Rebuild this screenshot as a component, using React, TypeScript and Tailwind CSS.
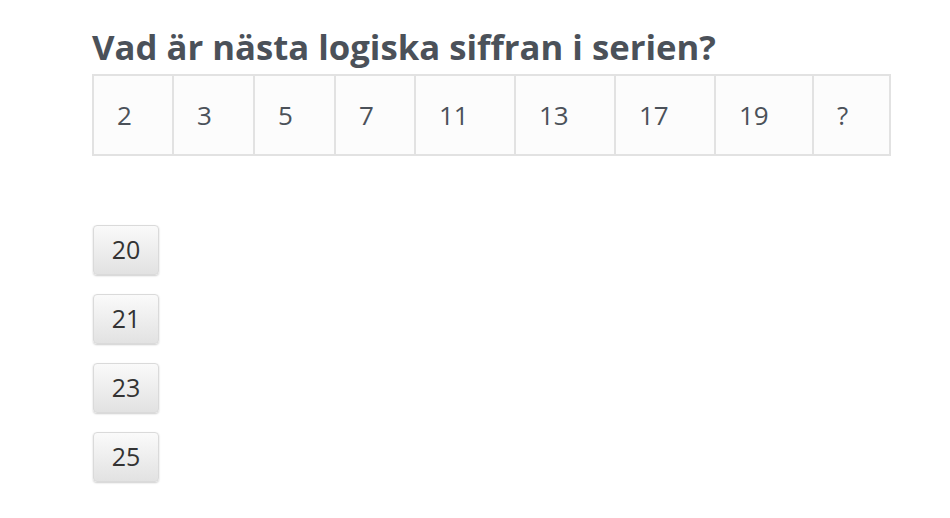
import React from "react";

const cells = [
  { v: "2", w: 80 },
  { v: "3", w: 81 },
  { v: "5", w: 81 },
  { v: "7", w: 80 },
  { v: "11", w: 100 },
  { v: "13", w: 100 },
  { v: "17", w: 100 },
  { v: "19", w: 98 },
  { v: "?", w: 77 },
];

const answers = ["20", "21", "23", "25"];

export default function App() {
  return (
    <div
      className="w-[950px] h-[518px] bg-white pl-[92px] pt-[24px]"
      style={{ fontFamily: '"Open Sans", sans-serif' }}
    >
      <h1 className="text-[34.7px] leading-[46px] font-bold text-[#4b5159] whitespace-nowrap">
        Vad är nästa logiska siffran i serien?
      </h1>
      <table className="border-collapse mt-[4px]">
        <tbody>
          <tr>
            {cells.map((c, i) => (
              <td
                key={i}
                className="border-2 border-[#e2e2e2] bg-[#fcfcfc] h-[80px] pl-[23px] text-[26px] text-[#4b5159] align-middle"
                style={{ width: c.w }}
              >
                {c.v}
              </td>
            ))}
          </tr>
        </tbody>
      </table>
      <div className="flex flex-col gap-[19px] mt-[69px]">
        {answers.map((a) => (
          <button
            key={a}
            className="w-[66px] h-[50px] ml-[1px] rounded-[4px] border border-[#dadada] bg-gradient-to-b from-[#fafafa] to-[#e2e2e2] shadow-[0_1px_2px_rgba(0,0,0,0.2)] text-[25px] text-[#333] flex items-center justify-center"
          >
            {a}
          </button>
        ))}
      </div>
    </div>
  );
}
